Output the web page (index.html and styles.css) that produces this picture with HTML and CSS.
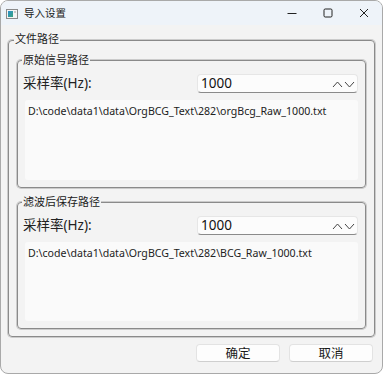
FILE: index.html
```html
<!DOCTYPE html>
<html lang="zh-CN">
<head>
<meta charset="utf-8">
<link rel="stylesheet" href="styles.css">
</head>
<body>
<div class="window">
  <div class="titlebar">
    <svg class="app-icon" width="12" height="10" viewBox="0 0 12 10">
      <defs>
        <linearGradient id="g" x1="0" y1="0" x2="1" y2="1">
          <stop offset="0" stop-color="#2b8fd0"/>
          <stop offset="1" stop-color="#3aa37a"/>
        </linearGradient>
      </defs>
      <rect x="0.5" y="0.5" width="11" height="9" fill="#f4f4f4" stroke="#8a8a8a"/>
      <rect x="2" y="2" width="5" height="6" fill="url(#g)"/>
      <rect x="8" y="2" width="2" height="2" fill="#c8c8c8"/>
    </svg>
    <span class="title">导入设置</span>
    <div class="controls">
      <span class="ctl">
        <svg width="10" height="10" viewBox="0 0 10 10"><line x1="0.5" y1="5.5" x2="9.5" y2="5.5" stroke="#222" stroke-width="1"/></svg>
      </span>
      <span class="ctl">
        <svg width="10" height="10" viewBox="0 0 10 10"><rect x="1" y="1" width="8" height="8" rx="1.2" fill="none" stroke="#222" stroke-width="1"/></svg>
      </span>
      <span class="ctl">
        <svg width="10" height="10" viewBox="0 0 10 10"><path d="M1 1 L9 9 M9 1 L1 9" stroke="#222" stroke-width="1"/></svg>
      </span>
    </div>
  </div>
  <div class="body">
    <div class="group outer">
      <span class="group-title outer-title">文件路径</span>
      <div class="group inner first">
        <span class="group-title">原始信号路径</span>
        <div class="rate-row">
          <span class="label">采样率(Hz):</span>
          <div class="spin">
            <span class="spin-value">1000</span>
            <svg class="arrows" width="24" height="8" viewBox="0 0 24 8"><polyline points="1,7 5.5,2 10,7" fill="none" stroke="#444" stroke-width="1"/><polyline points="13,2 17.5,7 22,2" fill="none" stroke="#444" stroke-width="1"/></svg>
          </div>
        </div>
        <div class="path-box">D:\code\data1\data\OrgBCG_Text\282\orgBcg_Raw_1000.txt</div>
      </div>
      <div class="group inner second">
        <span class="group-title">滤波后保存路径</span>
        <div class="rate-row">
          <span class="label">采样率(Hz):</span>
          <div class="spin">
            <span class="spin-value">1000</span>
            <svg class="arrows" width="24" height="8" viewBox="0 0 24 8"><polyline points="1,7 5.5,2 10,7" fill="none" stroke="#444" stroke-width="1"/><polyline points="13,2 17.5,7 22,2" fill="none" stroke="#444" stroke-width="1"/></svg>
          </div>
        </div>
        <div class="path-box">D:\code\data1\data\OrgBCG_Text\282\BCG_Raw_1000.txt</div>
      </div>
    </div>
    <div class="buttons">
      <button class="btn">确定</button>
      <button class="btn">取消</button>
    </div>
  </div>
</div>
</body>
</html>
```

FILE: styles.css
```css
html, body {
  margin: 0;
  padding: 0;
  background: #ffffff;
}
body {
  font-family: "Noto Sans", "Noto Sans CJK SC", sans-serif;
  color: #1a1a1a;
}
.window {
  width: 383px;
  height: 374px;
  box-sizing: border-box;
  border: 1px solid #a9a9a9;
  border-radius: 8px;
  overflow: hidden;
  background: #f3f3f3;
  display: flex;
  flex-direction: column;
}
.titlebar {
  height: 24px;
  flex: none;
  background: #eef3f9;
  display: flex;
  align-items: center;
  padding-left: 5px;
}
.app-icon {
  display: block;
  margin-top: 1px;
}
.title {
  font-family: "Noto Sans CJK SC", sans-serif;
  font-size: 10.5px;
  line-height: 14px;
  margin-left: 6px;
  color: #222;
}
.controls {
  margin-left: auto;
  display: flex;
  height: 24px;
}
.ctl {
  width: 36px;
  display: flex;
  align-items: center;
  justify-content: center;
}
.ctl svg { display: block; }
.body {
  flex: 1;
  padding: 15px 7px 0 7px;
}
.group {
  position: relative;
  border: 1px solid #8a8a8a;
  box-shadow: 0 0 0 1px #cbcbcb;
  border-radius: 4px;
  box-sizing: border-box;
}
.outer {
  height: 297px;
  padding: 19px 8px 7px 8px;
  display: flex;
  flex-direction: column;
  gap: 14px;
}
.inner {
  padding: 13px 7px 7px 5px;
  display: flex;
  flex-direction: column;
}
.inner.first { height: 128px; }
.inner.second { height: 127px; }
.group-title {
  position: absolute;
  top: -9px;
  left: 4px;
  padding: 0 1px;
  background: #f3f3f3;
  font-family: "Noto Sans CJK SC", sans-serif;
  font-size: 11px;
  line-height: 14px;
  color: #1a1a1a;
}
.outer-title {
  top: -10px;
  left: 5px;
}
.rate-row {
  display: flex;
  justify-content: space-between;
  align-items: center;
  height: 19px;
}
.label {
  font-size: 13.5px;
  line-height: 19px;
  color: #222;
}
.spin {
  width: 161px;
  height: 19px;
  box-sizing: border-box;
  background: #fcfcfc;
  border: 1px solid #e6e6e6;
  border-bottom: 1px solid #8a8a8a;
  border-radius: 4px;
  display: flex;
  align-items: center;
  padding: 0 1px 0 3px;
}
.spin-value {
  font-size: 13.5px;
  line-height: 17px;
  color: #111;
}
.arrows {
  margin-left: auto;
  display: block;
}
.path-box {
  flex: 1;
  margin: 7px 0 0 2px;
  background: #fafafa;
  border-radius: 3px;
  padding: 4px 3px;
  font-size: 10.6px;
  line-height: 14px;
  color: #222;
}
.buttons {
  display: flex;
  justify-content: flex-end;
  gap: 9px;
  margin-top: 7px;
  padding-right: 2px;
}
.btn {
  width: 84px;
  height: 18px;
  padding: 0;
  background: #fdfdfd;
  border: 1px solid #e3e3e3;
  border-bottom-color: #cfcfcf;
  border-radius: 4px;
  font-family: "Noto Sans CJK SC", sans-serif;
  font-size: 12.5px;
  line-height: 16px;
  color: #1a1a1a;
}
```
